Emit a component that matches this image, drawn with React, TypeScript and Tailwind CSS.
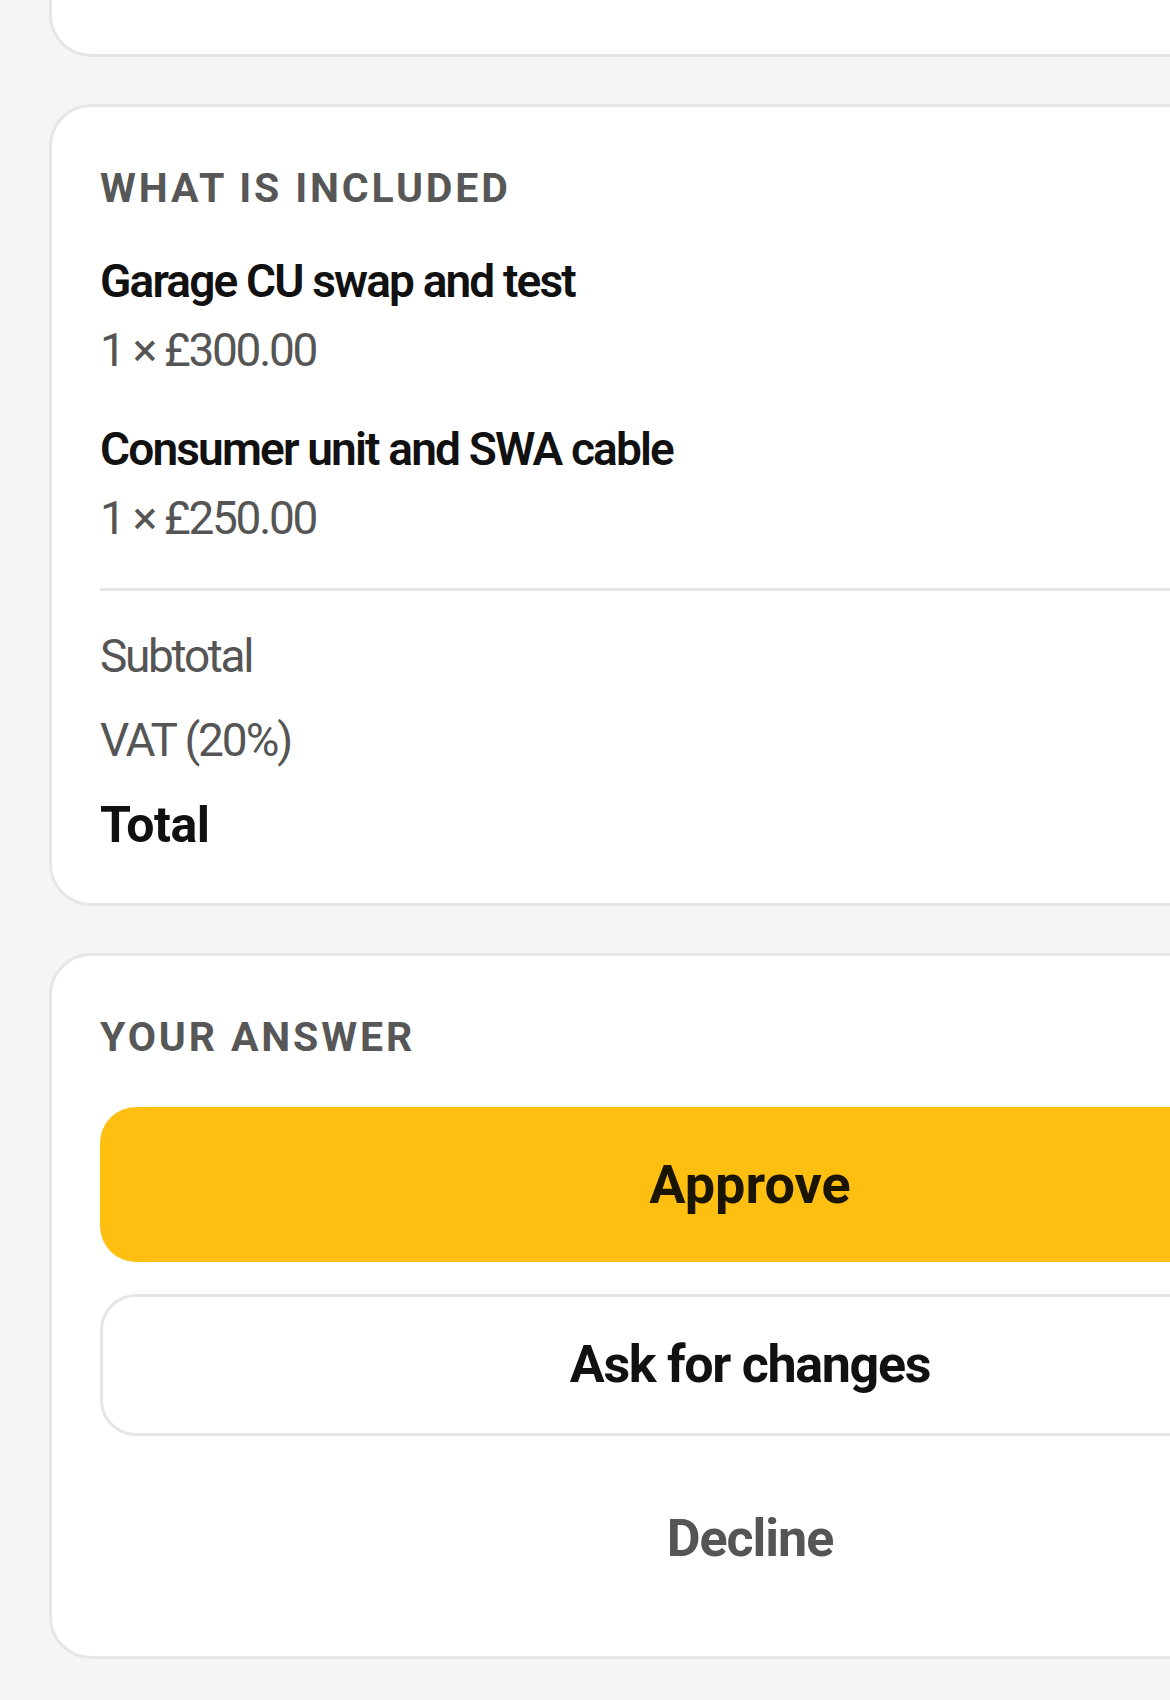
const lineItems = [
  { name: "Garage CU swap and test", qty: 1, price: "£300.00" },
  { name: "Consumer unit and SWA cable", qty: 1, price: "£250.00" },
];

function SectionLabel({ children }: { children: string }) {
  return (
    <h2 className="text-[41px] leading-[48px] font-bold uppercase tracking-[0.07em] text-[#575757]">
      {children}
    </h2>
  );
}

export default function App() {
  return (
    <div
      className="w-full min-h-[1700px] overflow-hidden bg-[#f5f5f5] pl-[49px]"
      style={{ fontFamily: "Roboto, 'Noto Sans', sans-serif" }}
    >
      <div className="flex w-[1402px] flex-col gap-[47px] pb-[48px]">
        {/* previous card, cut off at the top */}
        <div className="h-[57px] rounded-b-[42px] border-[3px] border-t-0 border-[#e6e6e6] bg-white" />

        <section className="rounded-[42px] border-[3px] border-[#e6e6e6] bg-white px-[48px] pt-[57px] pb-[49px]">
          <SectionLabel>What is included</SectionLabel>
          {lineItems.map((item, i) => (
            <div key={item.name} className={i === 0 ? "mt-[42px]" : "mt-[45px]"}>
              <p className="text-[46px] leading-[54px] font-semibold tracking-[-0.04em] text-[#111]">
                {item.name}
              </p>
              <p className="mt-[15px] text-[46px] leading-[54px] tracking-[-0.05em] text-[#555]">
                {item.qty} × {item.price}
              </p>
            </div>
          ))}
          <div className="mt-[43px] h-[3px] bg-[#e6e6e6]" />
          <p className="mt-[38px] text-[46px] leading-[54px] tracking-[-0.05em] text-[#555]">Subtotal</p>
          <p className="mt-[30px] text-[46px] leading-[54px] tracking-[-0.045em] text-[#555]">VAT (20%)</p>
          <p className="mt-[29px] text-[50px] leading-[58px] font-bold tracking-[-0.01em] text-[#111]">Total</p>
        </section>

        <section className="rounded-[42px] border-[3px] border-[#e6e6e6] bg-white px-[48px] pt-[57px] pb-[46px]">
          <SectionLabel>Your answer</SectionLabel>
          <div className="mt-[46px] flex flex-col gap-[32px]">
            <button className="flex h-[155px] w-full items-center justify-center rounded-[36px] bg-[#febf10] text-[54px] font-bold text-[#1a1500]">
              Approve
            </button>
            <button className="flex h-[142px] w-full items-center justify-center rounded-[36px] border-[3px] border-[#e6e6e6] bg-white text-[52px] font-bold tracking-[-0.025em] text-[#111]">
              Ask for changes
            </button>
            <button className="flex h-[142px] w-full items-center justify-center rounded-[36px] text-[52px] font-bold tracking-[-0.02em] text-[#555]">
              Decline
            </button>
          </div>
        </section>
      </div>
    </div>
  );
}
